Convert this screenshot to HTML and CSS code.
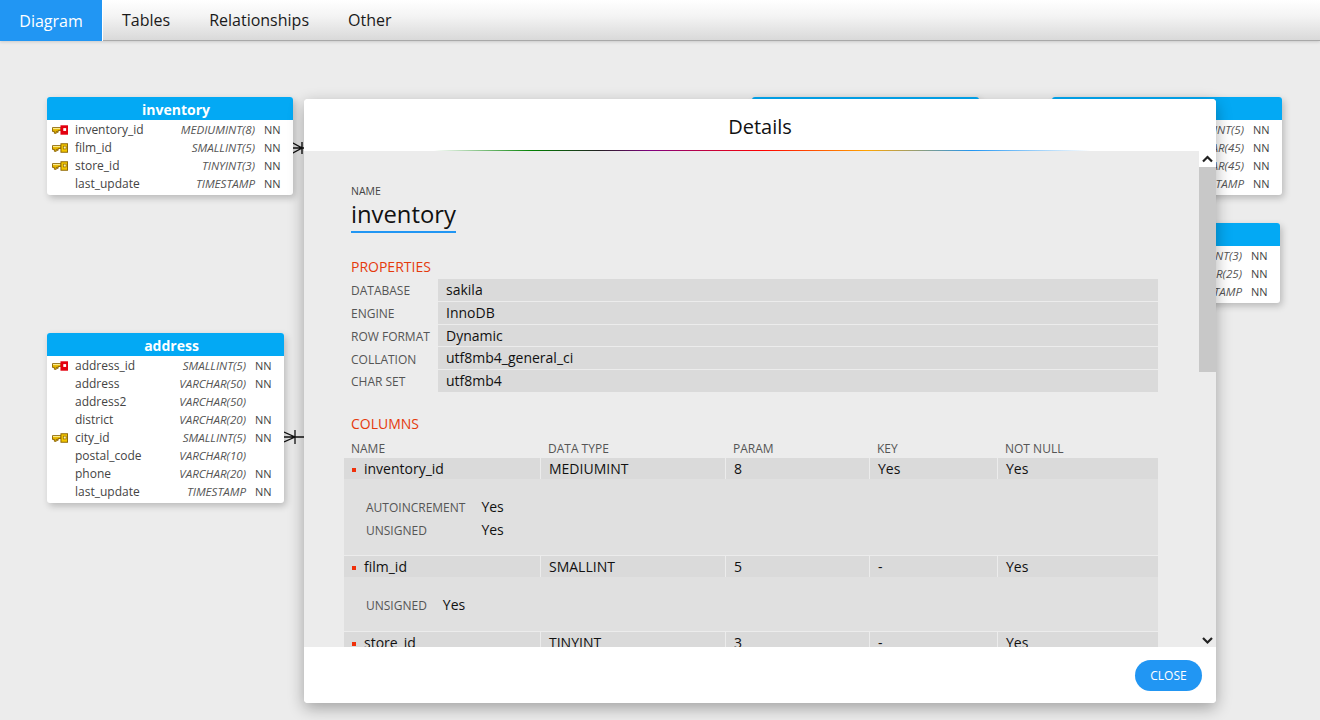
FILE: index.html
```html
<!DOCTYPE html>
<html lang="en">
<head>
<meta charset="utf-8">
<title>Details</title>
<link rel="stylesheet" href="styles.css">
</head>
<body>
<svg class="defs" width="0" height="0" aria-hidden="true">
  <symbol id="key-pk" viewBox="0 0 17 10">
    <path d="M.5 2.5h9v3h-3v2h-1v-1h-1v2h-2v-2h-2z" fill="#e8b800" stroke="#8a6200"/>
    <rect x="1" y="3" width="8" height="1" fill="#fff3a0"/>
    <rect x="9" y="0" width="8" height="10" fill="#e3000f"/>
    <rect x="12" y="3" width="3" height="3" fill="#fff"/>
  </symbol>
  <symbol id="key-fk" viewBox="0 0 17 10">
    <path d="M.5 2.5h9v3h-3v2h-1v-1h-1v2h-2v-2h-2z" fill="#e8b800" stroke="#8a6200"/>
    <rect x="1" y="3" width="8" height="1" fill="#fff3a0"/>
    <rect x="9.5" y=".5" width="7" height="9" fill="#f2c600" stroke="#8a6200"/>
    <rect x="12" y="3" width="3" height="3" fill="#fff3a0" stroke="#8a6200" stroke-width=".7"/>
  </symbol>
</svg>

<nav class="tabs">
  <a class="tab tab-active">Diagram</a>
  <a class="tab">Tables</a>
  <a class="tab">Relationships</a>
  <a class="tab">Other</a>
</nav>

<main class="canvas">
  <svg class="link link-a" width="14" height="14" viewBox="0 0 14 14"><path d="M0 1.5l10 5.5-10 5.5M0 7h14M10 1v12" fill="none" stroke="#111" stroke-width="1.4"/></svg>
  <svg class="link link-b" width="24" height="14" viewBox="0 0 24 14"><path d="M0 2l11 5-11 5M0 7h24M11 0v14" fill="none" stroke="#111" stroke-width="1.3"/></svg>

  <section class="erd erd-inventory">
    <h2 class="erd-title">inventory</h2>
    <div class="erd-rows">
      <div class="erd-row"><svg class="key"><use href="#key-pk"/></svg><span class="erd-name">inventory_id</span><i class="erd-type">MEDIUMINT(8)</i><span class="erd-nn">NN</span></div>
      <div class="erd-row"><svg class="key"><use href="#key-fk"/></svg><span class="erd-name">film_id</span><i class="erd-type">SMALLINT(5)</i><span class="erd-nn">NN</span></div>
      <div class="erd-row"><svg class="key"><use href="#key-fk"/></svg><span class="erd-name">store_id</span><i class="erd-type">TINYINT(3)</i><span class="erd-nn">NN</span></div>
      <div class="erd-row"><span class="key"></span><span class="erd-name">last_update</span><i class="erd-type">TIMESTAMP</i><span class="erd-nn">NN</span></div>
    </div>
  </section>

  <section class="erd erd-address">
    <h2 class="erd-title">address</h2>
    <div class="erd-rows">
      <div class="erd-row"><svg class="key"><use href="#key-pk"/></svg><span class="erd-name">address_id</span><i class="erd-type">SMALLINT(5)</i><span class="erd-nn">NN</span></div>
      <div class="erd-row"><span class="key"></span><span class="erd-name">address</span><i class="erd-type">VARCHAR(50)</i><span class="erd-nn">NN</span></div>
      <div class="erd-row"><span class="key"></span><span class="erd-name">address2</span><i class="erd-type">VARCHAR(50)</i><span class="erd-nn"></span></div>
      <div class="erd-row"><span class="key"></span><span class="erd-name">district</span><i class="erd-type">VARCHAR(20)</i><span class="erd-nn">NN</span></div>
      <div class="erd-row"><svg class="key"><use href="#key-fk"/></svg><span class="erd-name">city_id</span><i class="erd-type">SMALLINT(5)</i><span class="erd-nn">NN</span></div>
      <div class="erd-row"><span class="key"></span><span class="erd-name">postal_code</span><i class="erd-type">VARCHAR(10)</i><span class="erd-nn"></span></div>
      <div class="erd-row"><span class="key"></span><span class="erd-name">phone</span><i class="erd-type">VARCHAR(20)</i><span class="erd-nn">NN</span></div>
      <div class="erd-row"><span class="key"></span><span class="erd-name">last_update</span><i class="erd-type">TIMESTAMP</i><span class="erd-nn">NN</span></div>
    </div>
  </section>

  <section class="erd erd-hidden"></section>

  <section class="erd erd-actor">
    <h2 class="erd-title">actor</h2>
    <div class="erd-rows">
      <div class="erd-row"><svg class="key"><use href="#key-pk"/></svg><span class="erd-name">actor_id</span><i class="erd-type">SMALLINT(5)</i><span class="erd-nn">NN</span></div>
      <div class="erd-row"><span class="key"></span><span class="erd-name">first_name</span><i class="erd-type">VARCHAR(45)</i><span class="erd-nn">NN</span></div>
      <div class="erd-row"><span class="key"></span><span class="erd-name">last_name</span><i class="erd-type">VARCHAR(45)</i><span class="erd-nn">NN</span></div>
      <div class="erd-row"><span class="key"></span><span class="erd-name">last_update</span><i class="erd-type">TIMESTAMP</i><span class="erd-nn">NN</span></div>
    </div>
  </section>

  <section class="erd erd-category">
    <h2 class="erd-title">category</h2>
    <div class="erd-rows">
      <div class="erd-row"><svg class="key"><use href="#key-pk"/></svg><span class="erd-name">category_id</span><i class="erd-type">TINYINT(3)</i><span class="erd-nn">NN</span></div>
      <div class="erd-row"><span class="key"></span><span class="erd-name">name</span><i class="erd-type">VARCHAR(25)</i><span class="erd-nn">NN</span></div>
      <div class="erd-row"><span class="key"></span><span class="erd-name">last_update</span><i class="erd-type">TIMESTAMP</i><span class="erd-nn">NN</span></div>
    </div>
  </section>
</main>

<div class="modal" role="dialog">
  <header class="modal-head">Details</header>
  <div class="modal-body">
    <div class="scroll">
      <div class="field-label">NAME</div>
      <div class="name-value">inventory</div>

      <h3 class="section">PROPERTIES</h3>
      <div class="props">
        <div class="prop"><span class="prop-label">DATABASE</span><span class="prop-value">sakila</span></div>
        <div class="prop"><span class="prop-label">ENGINE</span><span class="prop-value">InnoDB</span></div>
        <div class="prop"><span class="prop-label">ROW FORMAT</span><span class="prop-value">Dynamic</span></div>
        <div class="prop"><span class="prop-label">COLLATION</span><span class="prop-value">utf8mb4_general_ci</span></div>
        <div class="prop"><span class="prop-label">CHAR SET</span><span class="prop-value">utf8mb4</span></div>
      </div>

      <h3 class="section section-cols">COLUMNS</h3>
      <div class="cols cols-head">
        <span>NAME</span><span>DATA TYPE</span><span>PARAM</span><span>KEY</span><span>NOT NULL</span>
      </div>
      <div class="cols cols-row">
        <span class="cell-name">inventory_id</span><span>MEDIUMINT</span><span>8</span><span>Yes</span><span>Yes</span>
      </div>
      <div class="detail detail-tall">
        <span class="detail-label">AUTOINCREMENT</span><span class="detail-value">Yes</span>
        <span class="detail-label">UNSIGNED</span><span class="detail-value">Yes</span>
      </div>
      <div class="cols cols-row">
        <span class="cell-name">film_id</span><span>SMALLINT</span><span>5</span><span>-</span><span>Yes</span>
      </div>
      <div class="detail">
        <span class="detail-label">UNSIGNED</span><span class="detail-value">Yes</span>
      </div>
      <div class="cols cols-row">
        <span class="cell-name">store_id</span><span>TINYINT</span><span>3</span><span>-</span><span>Yes</span>
      </div>
    </div>
    <div class="scrollbar">
      <svg class="chev chev-up" width="17" height="14" viewBox="0 0 17 14"><path d="M4 9.5l4.5-4.5 4.5 4.5" fill="none" stroke="#222" stroke-width="2.2"/></svg>
      <div class="thumb"></div>
      <svg class="chev chev-down" width="17" height="14" viewBox="0 0 17 14"><path d="M4 5l4.5 4.5 4.5-4.5" fill="none" stroke="#222" stroke-width="2.2"/></svg>
    </div>
  </div>
  <footer class="modal-foot"><button class="close" type="button">CLOSE</button></footer>
</div>
</body>
</html>
```
FILE: styles.css
```css
* { box-sizing: border-box; }
html, body { margin: 0; height: 720px; overflow: hidden; }
body { background: #ececec; font-family: "Open Sans", "Liberation Sans", sans-serif; color: #111; }
.defs { position: absolute; }

.tabs {
  display: flex; height: 41px;
  background: linear-gradient(#fff 0%, #f4f4f4 40%, #d9d9d9 100%);
  border-bottom: 1px solid #a9a9a9;
  box-shadow: 0 1px 3px rgba(0,0,0,.15);
}
.tab { display: flex; align-items: center; padding: 0 20px; font-size: 16px; color: #1a1a1a; line-height: 40px; }
.tab-active { width: 102px; height: 41px; justify-content: center; background: #2196f3; color: #fff; margin-right: 1px; box-shadow: 1px 0 0 #fff; padding: 0; }
.tab:nth-child(2) { margin-left: -1px; }
.tab:nth-child(3) { padding-left: 19px; }
.tab:nth-child(4) { margin-left: -1px; }

.canvas { position: relative; height: 679px; }
.erd {
  position: absolute; background: #fff; border-radius: 3px; overflow: hidden;
  box-shadow: 2px 3px 7px rgba(0,0,0,.22);
}
.erd-inventory { left: 47px; top: 56px; width: 246px; }
.erd-address { left: 47px; top: 292px; width: 237px; }
.erd-hidden { left: 752px; top: 56px; width: 227px; height: 120px; background: #03a9f4; }
.erd-actor { left: 1052px; top: 56px; width: 230px; }
.erd-category { left: 1050px; top: 182px; width: 230px; }
.erd-title { margin: 0; height: 23px; padding-left: 12px; background: #03a9f4; color: #fff; font-size: 14px; font-weight: 700; line-height: 25px; text-align: center; }
.erd-rows { padding: 0 0 3px; }
.erd-row { display: flex; align-items: center; height: 18px; padding: 0 12px 0 5px; font-size: 12px; color: #444; }
.key { width: 16px; height: 10px; flex: none; margin: 2px 7px 0 0; }
.erd-name { flex: 1; white-space: nowrap; }
.erd-type { font-size: 11.6px; white-space: nowrap; color: #555; }
.erd-nn { width: 17px; margin-left: 9px; font-size: 11px; white-space: nowrap; }

.link { position: absolute; }
.link-a { left: 292px; top: 100px; }
.link-b { left: 284px; top: 389px; }

.modal {
  position: absolute; left: 304px; top: 99px; width: 912px; height: 604px;
  display: flex; flex-direction: column; background: #fff; border-radius: 4px; overflow: hidden;
  box-shadow: 0 5px 16px rgba(0,0,0,.32);
}
.modal-head {
  position: relative; height: 52px; flex: none; text-align: center; font-size: 20px; line-height: 56px; color: #111; background: #fff;
}
.modal-head::after {
  content: ""; position: absolute; left: 130px; right: 126px; bottom: -1px; height: 2px;
  background: linear-gradient(to right, transparent 0, green 15%, #222 25%, purple 33%, red 50%, orange 66%, #2196f3 82%, transparent 100%);
}
.modal-body { position: relative; flex: 1; min-height: 0; background: #ececec; }
.scroll { height: 100%; overflow: hidden; padding: 33px 58px 0 40px; }
.field-label { margin-left: 7px; font-size: 10.5px; line-height: 14px; color: #444; }
.name-value {
  display: inline-block; margin: 0 0 0 7px; font-size: 23.8px; height: 35px; line-height: 32px; color: #111;
  border-bottom: 2px solid #2196f3;
}
.section { margin: 24px 0 2px 7px; font-size: 14px; font-weight: 400; line-height: 20px; color: #e53a0c; }
.section-cols { margin: 22px 0 0 7px; }
.props { display: flex; flex-direction: column; gap: 1px; }
.prop { display: flex; height: 21.75px; align-items: center; }
.prop-label { width: 87px; margin-left: 7px; flex: none; font-size: 12px; color: #555; white-space: nowrap; padding-top: 2px; }
.prop-value { flex: 1; height: 100%; padding-left: 8px; background: #dadada; font-size: 14px; line-height: 21px; }
.cols { display: grid; grid-template-columns: 196px 184px 143px 127px 160px; column-gap: 1px; }
.cols-head { height: 19px; margin-top: 5px; font-size: 12px; color: #555; line-height: 20px; }
.cols-head span { padding-left: 7px; }
.cols-row { height: 21.5px; font-size: 14px; line-height: 21px; }
.cols-row span { padding-left: 8px; background: #dadada; color: #111; }
.cols-row span.cell-name { position: relative; padding-left: 20px; }
.cell-name::before { content: ""; position: absolute; left: 8px; top: 10px; width: 4px; height: 4px; background: #f0300a; }
.detail {
  display: grid; grid-template-columns: max-content max-content; grid-auto-rows: 22.5px; column-gap: 16px; align-items: center; align-content: center;
  padding: 0 22px; background: #e0e0e0; margin-bottom: 1px; height: 54px;
}
.detail-tall { height: 75.5px; padding-top: 2px; }
.detail-label { font-size: 12px; color: #555; padding-top: 2px; }
.detail-value { font-size: 14px; color: #111; }

.scrollbar { position: absolute; right: 0; top: 0; bottom: 0; width: 17px; display: flex; flex-direction: column; }
.chev { flex: none; }
.chev-up { height: 16px; background: #fff; }
.thumb { height: 205px; background: #c8c8c8; }
.chev-down { margin-top: auto; }

.modal-foot { height: 56px; flex: none; display: flex; justify-content: flex-end; align-items: center; padding: 0 14px 0 0; background: #fff; }
.close {
  width: 67px; height: 31px; margin-top: 1px; border: 0; border-radius: 16px; background: #2196f3; color: #fff;
  font-family: inherit; font-size: 12px; padding: 0;
}
```
